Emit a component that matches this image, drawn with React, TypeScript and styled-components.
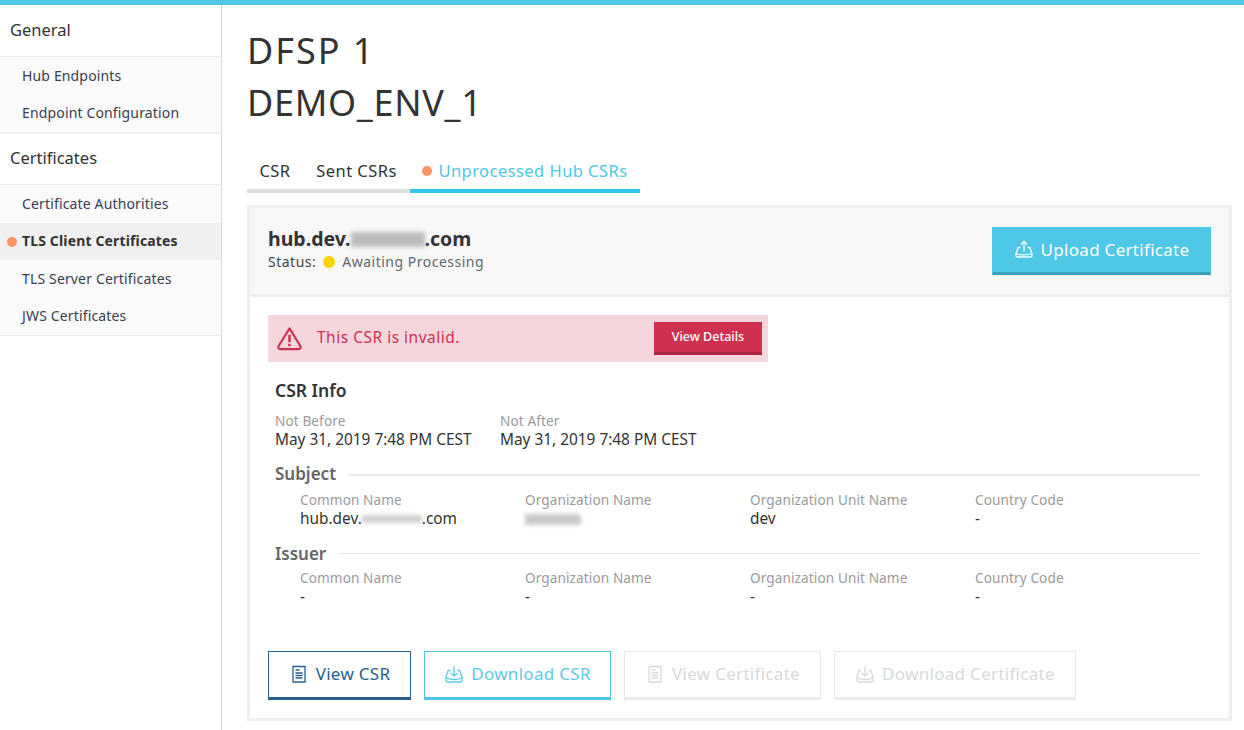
import styled, { createGlobalStyle } from 'styled-components';

const GlobalStyle = createGlobalStyle`
  html, body {
    margin: 0;
    height: 100%;
    overflow: hidden;
    background: #fff;
    font-family: 'Noto Sans', 'Open Sans', sans-serif;
    color: #333;
  }
  * { box-sizing: border-box; }
`;

const Page = styled.div`
  height: 730px;
  border-top: 5px solid #4fc7e7;
  display: flex;
`;

const Sidebar = styled.nav`
  width: 222px;
  flex: none;
  padding-top: 1px;
  border-right: 1px solid #ddd;
`;

const SectionTitle = styled.div`
  height: 51px;
  padding: 0 10px 3px;
  display: flex;
  align-items: center;
  font-size: 16.5px;
  color: #333;
  border-bottom: 1px solid #efefef;
`;

const MenuGroup = styled.div<{ $thick?: boolean }>`
  background: #fafafa;
  border-bottom: ${(p) => (p.$thick ? '2px' : '1px')} solid #efefef;
`;

const MenuItem = styled.div<{ $active?: boolean }>`
  position: relative;
  height: 37.5px;
  padding: 0 0 1px 22px;
  display: flex;
  align-items: center;
  font-size: 14px;
  letter-spacing: 0.15px;
  color: ${(p) => (p.$active ? '#333' : '#39404f')};
  font-weight: ${(p) => (p.$active ? 700 : 400)};
  background: ${(p) => (p.$active ? '#f0f0f0' : 'transparent')};
`;

const Dot = styled.span<{ $color: string; $size?: number }>`
  display: inline-block;
  flex: none;
  width: ${(p) => p.$size ?? 10}px;
  height: ${(p) => p.$size ?? 10}px;
  border-radius: 50%;
  background: ${(p) => p.$color};
`;

const MenuDot = styled(Dot)`
  position: absolute;
  left: 7px;
  top: 14px;
`;

const Main = styled.main`
  flex: 1;
  min-width: 0;
  padding: 20px 12px 0 25px;
`;

const Title = styled.h1<{ $spacing: number }>`
  margin: 0;
  height: 52px;
  line-height: 52px;
  font-size: 36px;
  font-weight: 400;
  letter-spacing: ${(p) => p.$spacing}px;
  color: #333;
`;

const Tabs = styled.div`
  margin-top: 26px;
  display: flex;
  height: 38px;
`;

const Tab = styled.div<{ $active?: boolean; $width: number }>`
  width: ${(p) => p.$width}px;
  display: flex;
  align-items: center;
  justify-content: center;
  gap: 6px;
  padding-bottom: 3px;
  font-size: 16.5px;
  letter-spacing: 0.45px;
  color: ${(p) => (p.$active ? '#4fc7e7' : '#333')};
  border-bottom: 4px solid ${(p) => (p.$active ? '#33c8f0' : '#e0e0e0')};
`;

const Card = styled.section`
  margin-top: 12px;
  height: 516px;
  border: 3px solid #eee;
`;

const CardHeader = styled.header`
  height: 89px;
  padding: 0 18px;
  background: #f7f7f7;
  border-bottom: 3px solid #eee;
  display: flex;
  justify-content: space-between;
  align-items: center;
`;

const HeaderText = styled.div`
  margin-bottom: 4px;
`;

const Host = styled.div`
  font-size: 19.5px;
  font-weight: 700;
  line-height: 26px;
  color: #333;
  display: flex;
  align-items: center;
`;

const Blur = styled.span<{ $w: number; $h: number; $tone?: string }>`
  display: inline-block;
  width: ${(p) => p.$w}px;
  height: ${(p) => p.$h}px;
  background: ${(p) => p.$tone ?? '#bdbdbd'};
  filter: blur(2px);
`;

const Status = styled.div`
  display: flex;
  align-items: center;
  font-size: 14px;
  letter-spacing: 0.5px;
  line-height: 20px;
  color: #444;
`;

const StatusValue = styled.span`
  margin-left: 7px;
  color: #666;
`;

const StatusDot = styled(Dot)`
  margin-left: 7px;
`;

const Button = styled.button<{ $kind: 'solid' | 'primary' | 'secondary' | 'disabled'; $width: number; $height?: number }>`
  width: ${(p) => p.$width}px;
  height: ${(p) => p.$height ?? 49}px;
  flex: none;
  display: inline-flex;
  align-items: center;
  justify-content: center;
  gap: 7px;
  padding: 0 0 2px;
  font-family: inherit;
  font-size: 17px;
  letter-spacing: 0.3px;
  background: ${(p) => (p.$kind === 'solid' ? '#4fc7e7' : '#fff')};
  color: ${(p) =>
    p.$kind === 'solid' ? '#fff' : p.$kind === 'primary' ? '#27608f' : p.$kind === 'secondary' ? '#5ccaea' : '#d8d8d8'};
  border: 1px solid
    ${(p) =>
      p.$kind === 'solid' ? '#4fc7e7' : p.$kind === 'primary' ? '#27608f' : p.$kind === 'secondary' ? '#4fc7e7' : '#eaeaea'};
  border-bottom: 3px solid
    ${(p) =>
      p.$kind === 'solid' ? '#3e9db8' : p.$kind === 'primary' ? '#27608f' : p.$kind === 'secondary' ? '#4fc7e7' : '#eaeaea'};
`;

const CardBody = styled.div`
  padding: 18px 29px 0 18px;
`;

const Alert = styled.div`
  width: 500px;
  height: 47px;
  padding: 0 6px 0 8px;
  display: flex;
  align-items: center;
  background: #f5d6dc;
  color: #d0304f;
  font-size: 15.5px;
  letter-spacing: 0.5px;
`;

const AlertText = styled.span`
  margin: 0 0 3px 14px;
  flex: 1;
`;

const DangerButton = styled.button`
  width: 108px;
  height: 33px;
  padding: 0 0 2px;
  border: 0;
  border-bottom: 3px solid #a92540;
  background: #d0304f;
  color: #fff;
  font-family: inherit;
  font-size: 12.5px;
  font-weight: 500;
`;

const Info = styled.div`
  padding-left: 7px;
`;

const InfoTitle = styled.h3`
  margin: 15px 0 0;
  font-size: 17.5px;
  font-weight: 600;
  line-height: 26px;
  color: #333;
`;

const DateRow = styled.div`
  margin-top: 9px;
  display: grid;
  grid-template-columns: 225px 225px;
`;

const Label = styled.div`
  font-size: 13.6px;
  line-height: 18px;
  letter-spacing: 0.1px;
  color: #9a9a9a;
`;

const Value = styled.div`
  margin-top: 1px;
  font-size: 15.4px;
  line-height: 18px;
  color: #333;
  display: flex;
  align-items: center;
  height: 18px;
`;

const GroupHead = styled.div<{ $top: number }>`
  margin-top: ${(p) => p.$top}px;
  display: flex;
  align-items: center;
  gap: 12px;
  height: 20px;
  font-size: 17px;
  font-weight: 600;
  color: #666;

  &::after {
    content: '';
    flex: 1;
    height: 1px;
    background: #e6e6e6;
  }
`;

const SubjectHead = styled(GroupHead)`
  height: 22px;
  line-height: 20px;

  &::after {
    height: 2px;
    background: #eaeaea;
    margin-top: 2px;
  }
`;

const Fields = styled.div`
  padding-left: 25px;
  margin-top: 6px;
  display: grid;
  grid-template-columns: repeat(4, 225px);
`;

const Actions = styled.div`
  margin-top: 45px;
  display: flex;
  gap: 13px;
`;

const Icon = styled.svg`
  width: 20px;
  height: 20px;
  flex: none;
  fill: none;
  stroke: currentColor;
  stroke-width: 1.3;
`;

const UploadIcon = () => (
  <Icon viewBox="0 0 20 20">
    <path d="M10 12.5V2.5M6.8 5.5 10 2.3l3.2 3.2" />
    <path d="M6.5 8.5H4.2L2 14.5v2c0 .8.8 1.5 1.8 1.5h12.4c1 0 1.8-.7 1.8-1.5v-2l-2.2-6h-2.3" />
    <path d="M2 14.5c2 1 4 1.3 8 1.3s6-.3 8-1.3" />
  </Icon>
);

const DownloadIcon = () => (
  <Icon viewBox="0 0 20 20">
    <path d="M10 2.5v9.5M6.8 9 10 12.2 13.2 9" />
    <path d="M6.5 6.5H4.2L2 12.5v4c0 .8.8 1.5 1.8 1.5h12.4c1 0 1.8-.7 1.8-1.5v-4l-2.2-6h-2.3" />
    <path d="M2 13.5c2 1.5 4 2 8 2s6-.5 8-2" />
  </Icon>
);

const DocIcon = () => (
  <Icon viewBox="0 0 20 20">
    <path d="M4 2.5h12v15.5H4z" />
    <path d="M6.5 6h4M6.5 9h7M6.5 11.5h7M6.5 14h7" />
  </Icon>
);

const subject = [
  { label: 'Common Name', value: <>hub.dev.<Blur $w={60} $h={8} $tone="#cfcfcf" />.com</> },
  { label: 'Organization Name', value: <Blur $w={56} $h={11} $tone="#c9c9c9" /> },
  { label: 'Organization Unit Name', value: 'dev' },
  { label: 'Country Code', value: '-' },
];

const issuer = [
  { label: 'Common Name', value: '-' },
  { label: 'Organization Name', value: '-' },
  { label: 'Organization Unit Name', value: '-' },
  { label: 'Country Code', value: '-' },
];

function App() {
  return (
    <Page>
      <GlobalStyle />
      <Sidebar>
        <SectionTitle>General</SectionTitle>
        <MenuGroup $thick>
          <MenuItem>Hub Endpoints</MenuItem>
          <MenuItem>Endpoint Configuration</MenuItem>
        </MenuGroup>
        <SectionTitle>Certificates</SectionTitle>
        <MenuGroup>
          <MenuItem>Certificate Authorities</MenuItem>
          <MenuItem $active>
            <MenuDot $color="#ff9566" />
            TLS Client Certificates
          </MenuItem>
          <MenuItem>TLS Server Certificates</MenuItem>
          <MenuItem>JWS Certificates</MenuItem>
        </MenuGroup>
      </Sidebar>
      <Main>
        <Title $spacing={2}>DFSP 1</Title>
        <Title $spacing={0.7}>DEMO_ENV_1</Title>
        <Tabs>
          <Tab $width={56}>CSR</Tab>
          <Tab $width={107}>Sent CSRs</Tab>
          <Tab $active $width={230}>
            <Dot $color="#ff9566" />
            Unprocessed Hub CSRs
          </Tab>
        </Tabs>
        <Card>
          <CardHeader>
            <HeaderText>
              <Host>
                hub.dev.<Blur $w={74} $h={15} />.com
              </Host>
              <Status>
                Status:
                <StatusDot $color="#ffd400" $size={12} />
                <StatusValue>Awaiting Processing</StatusValue>
              </Status>
            </HeaderText>
            <Button $kind="solid" $width={219} $height={48}>
              <UploadIcon />
              Upload Certificate
            </Button>
          </CardHeader>
          <CardBody>
            <Alert>
              <svg width="27" height="27" viewBox="0 0 28 28" fill="none" stroke="currentColor" strokeWidth="2.2">
                <path d="M14 3.5 2.6 22a2 2 0 0 0 1.7 3h19.4a2 2 0 0 0 1.7-3L14 3.5z" strokeLinejoin="round" />
                <path d="M14 10v8M14 19.5v2.5" strokeWidth="2.6" />
              </svg>
              <AlertText>This CSR is invalid.</AlertText>
              <DangerButton>View Details</DangerButton>
            </Alert>
            <Info>
              <InfoTitle>CSR Info</InfoTitle>
              <DateRow>
                <div>
                  <Label>Not Before</Label>
                  <Value>May 31, 2019 7:48 PM CEST</Value>
                </div>
                <div>
                  <Label>Not After</Label>
                  <Value>May 31, 2019 7:48 PM CEST</Value>
                </div>
              </DateRow>
              <SubjectHead $top={14}>Subject</SubjectHead>
              <Fields>
                {subject.map((f) => (
                  <div key={f.label}>
                    <Label>{f.label}</Label>
                    <Value>{f.value}</Value>
                  </div>
                ))}
              </Fields>
              <GroupHead $top={15}>Issuer</GroupHead>
              <Fields>
                {issuer.map((f) => (
                  <div key={f.label}>
                    <Label>{f.label}</Label>
                    <Value>{f.value}</Value>
                  </div>
                ))}
              </Fields>
            </Info>
            <Actions>
              <Button $kind="primary" $width={143}>
                <DocIcon />
                View CSR
              </Button>
              <Button $kind="secondary" $width={187}>
                <DownloadIcon />
                Download CSR
              </Button>
              <Button $kind="disabled" $width={197}>
                <DocIcon />
                View Certificate
              </Button>
              <Button $kind="disabled" $width={242}>
                <DownloadIcon />
                Download Certificate
              </Button>
            </Actions>
          </CardBody>
        </Card>
      </Main>
    </Page>
  );
}

export default App;
